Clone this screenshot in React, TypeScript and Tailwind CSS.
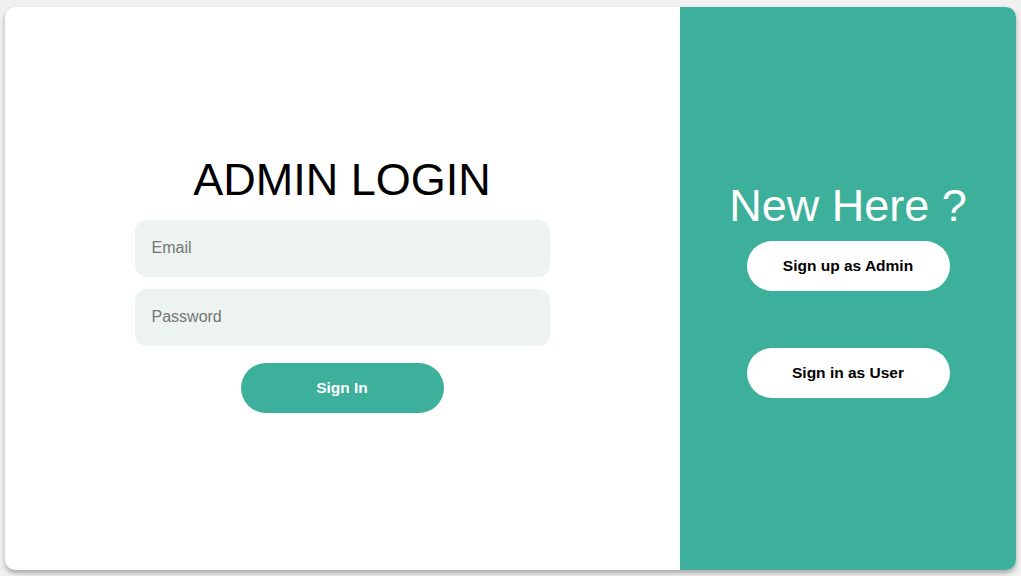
export default function App() {
  return (
    <div className="w-[1021px] h-[576px] bg-[#f0f0f0] pt-[7px] pl-[5px] pr-[5px] pb-[6px] font-['Liberation_Sans',Arial,sans-serif]">
      <div className="flex h-full w-full rounded-[10px] overflow-hidden shadow-[0_3px_5px_rgba(0,0,0,0.3)] bg-white">
        <div className="w-[675px] pr-[1px] flex flex-col items-center pt-[149.6px]">
          <h1 className="text-[45px] leading-[45px] text-black">ADMIN LOGIN</h1>
          <input
            placeholder="Email"
            className="mt-[18.4px] w-[415px] h-[57px] rounded-[12px] bg-[#ecf3f0] px-[17px] text-[16px] text-black placeholder:text-[#757575] outline-none"
          />
          <input
            type="password"
            placeholder="Password"
            className="mt-[12px] w-[415px] h-[57px] rounded-[12px] bg-[#ecf3f0] px-[17px] text-[16px] text-black placeholder:text-[#757575] outline-none"
          />
          <button className="mt-[17px] w-[203px] h-[50px] rounded-full bg-[#3db09b] text-white text-[15.5px] font-bold">
            Sign In
          </button>
        </div>
        <div className="flex-1 bg-[#3db09b] flex flex-col items-center pt-[175.6px]">
          <h2 className="text-[45px] leading-[45px] text-white">New Here ?</h2>
          <button className="mt-[13.4px] w-[203px] h-[50px] rounded-full bg-white text-black text-[15.5px] font-bold">
            Sign up as Admin
          </button>
          <button className="mt-[57px] w-[203px] h-[50px] rounded-full bg-white text-black text-[15.5px] font-bold">
            Sign in as User
          </button>
        </div>
      </div>
    </div>
  );
}
